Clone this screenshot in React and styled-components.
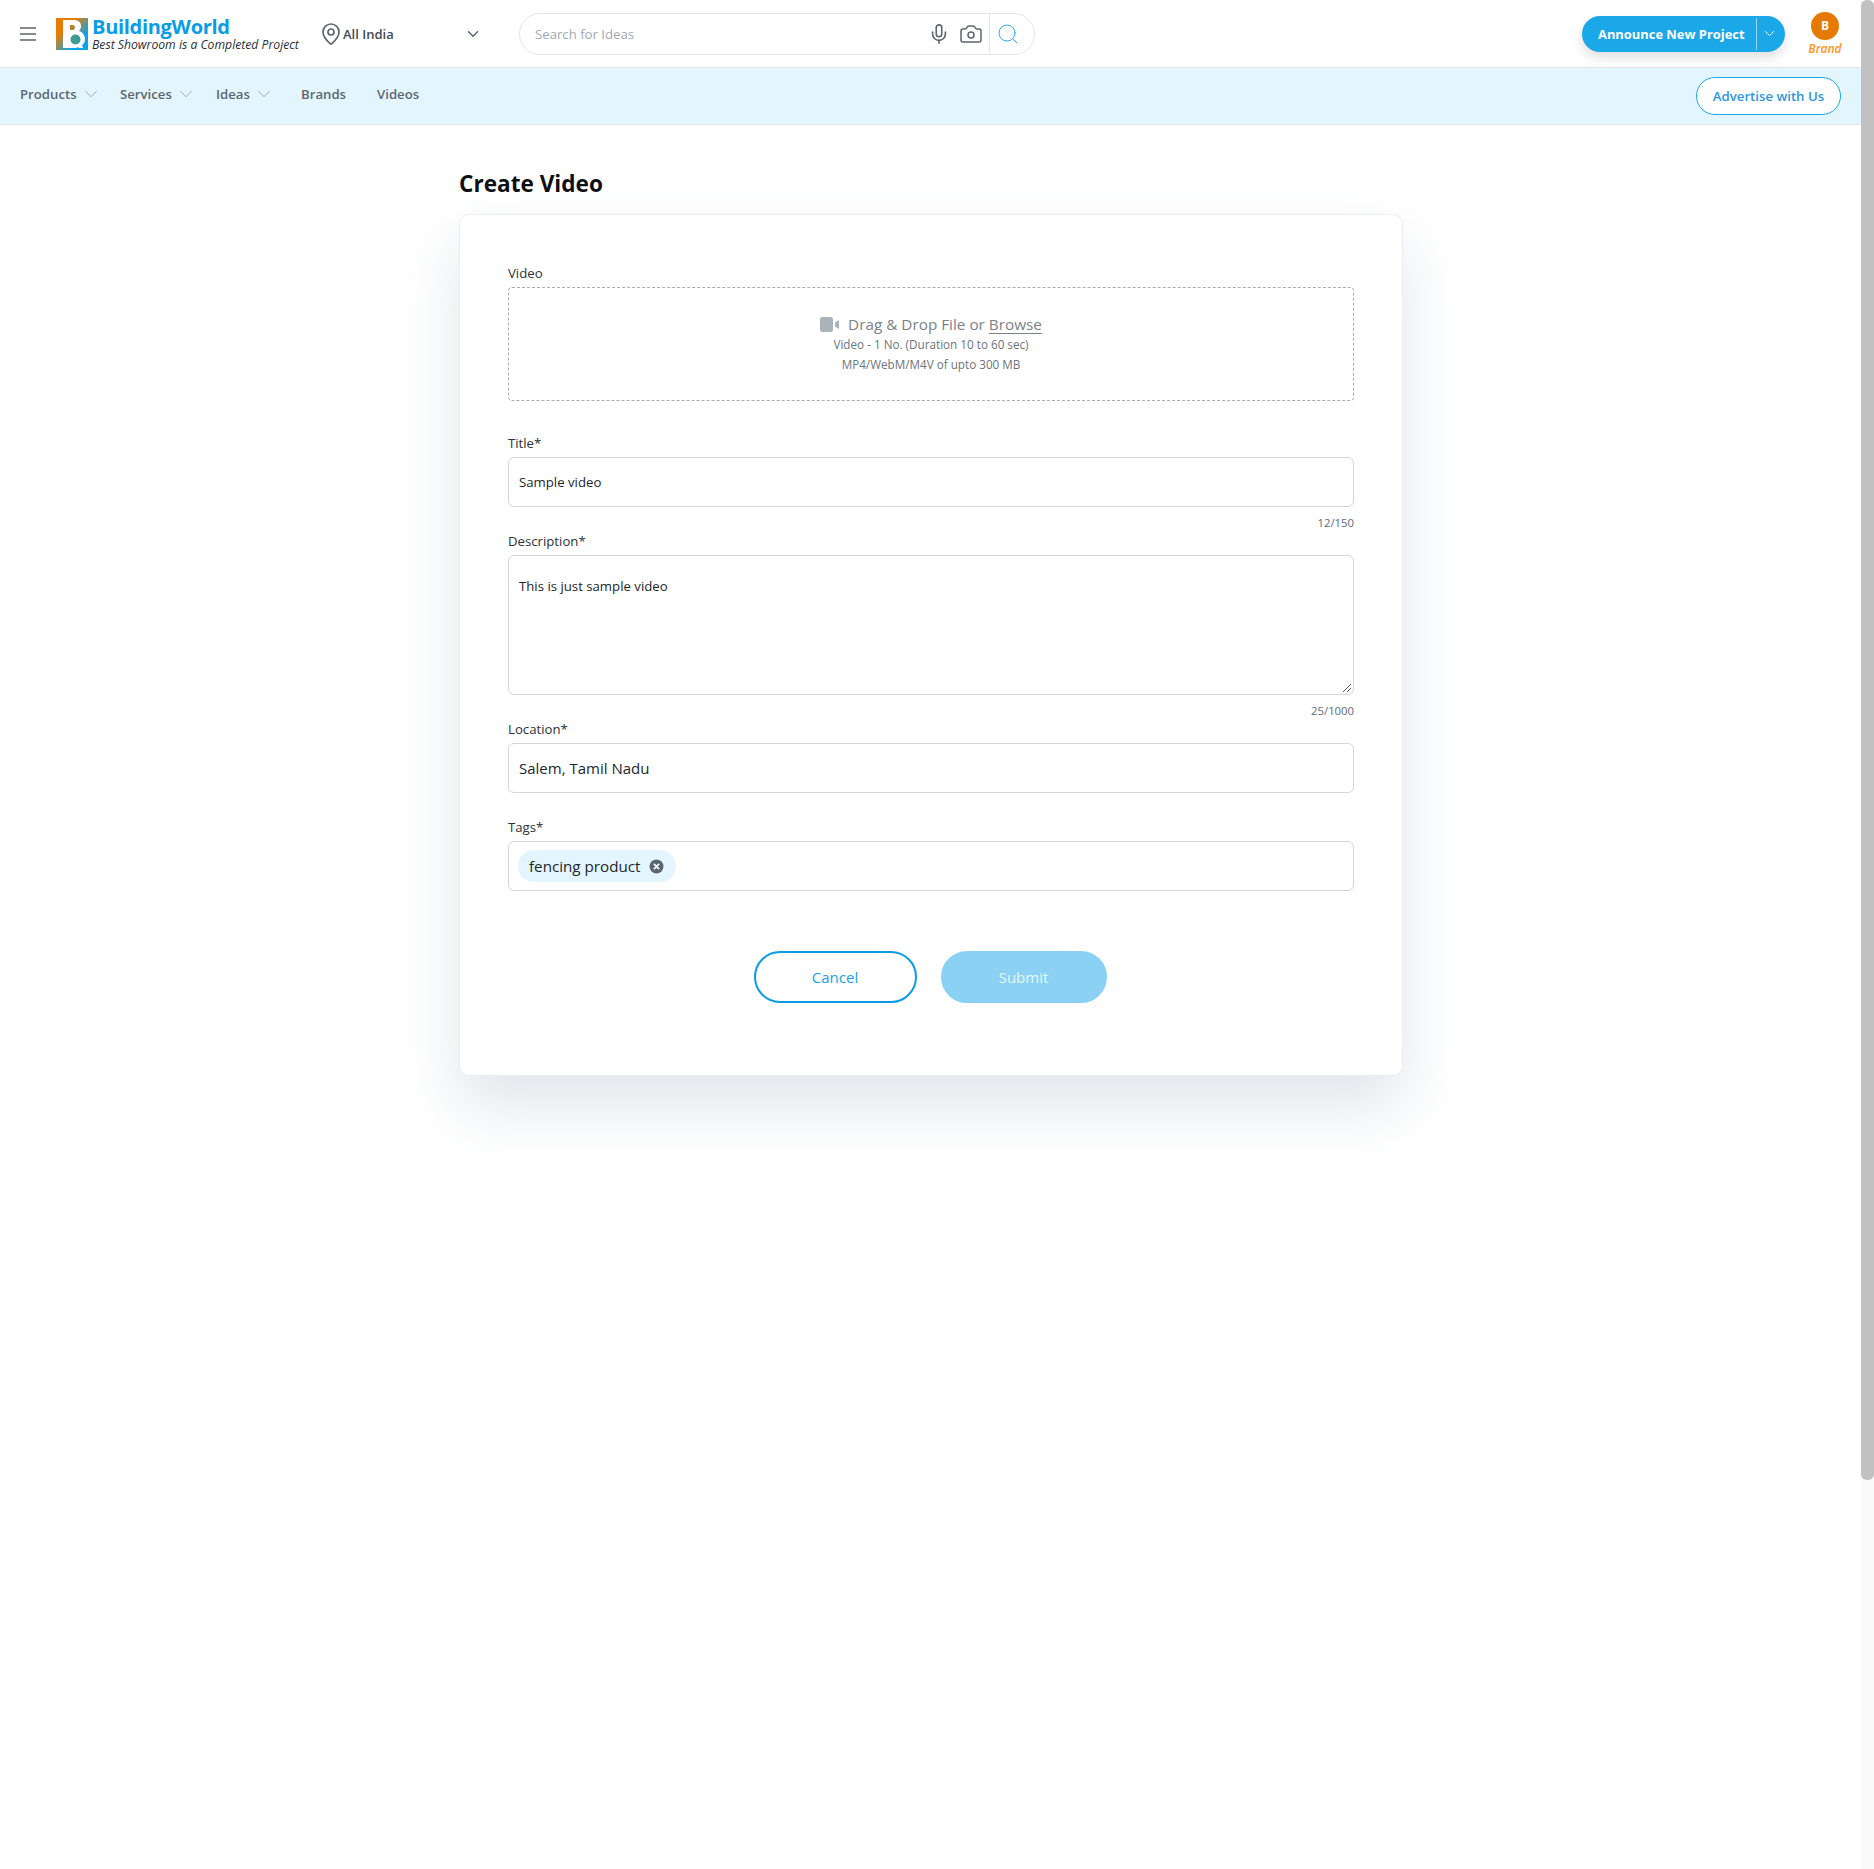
import React from "react";
import styled, { createGlobalStyle } from "styled-components";
import { ChevronDown, Search, Mic, Camera, MapPin } from "lucide-react";

const Global = createGlobalStyle`
  html, body { margin: 0; padding: 0; background: #fff; overflow: hidden; }
  * { box-sizing: border-box; }
  body { font-family: "Open Sans", "Noto Sans", "Liberation Sans", sans-serif; color: #1f2328; }
`;

const Shell = styled.div`
  display: flex;
  width: 1874px;
  height: 1869px;
  overflow: hidden;
`;
const Page = styled.div`
  flex: 1;
  min-width: 0;
`;
const ScrollTrack = styled.div`
  width: 13px;
  background: #fafafa;
`;
const ScrollThumb = styled.div`
  height: 1480px;
  background: #c1c1c1;
  border-radius: 6px;
`;

const Header = styled.header`
  height: 68px;
  display: flex;
  align-items: center;
  padding: 0 20px;
  background: #fff;
  border-bottom: 1px solid #dfe5ea;
`;
const MenuButton = styled.span`
  display: flex;
  width: 16px;
  color: #5f6670;
  margin-right: 20px;
`;
const LogoWrap = styled.div`
  display: flex;
  align-items: center;
  gap: 4px;
  width: 266px;
`;
const LogoText = styled.div`
  display: flex;
  flex-direction: column;
`;
const LogoName = styled.span`
  font-size: 20px;
  line-height: 22px;
  font-weight: 700;
  letter-spacing: -0.3px;
  color: #0a9de6;
`;
const LogoTag = styled.span`
  font-size: 12.2px;
  line-height: 13px;
  font-style: italic;
  color: #2a2f36;
  white-space: nowrap;
`;
const LocationBox = styled.div`
  display: flex;
  align-items: center;
  width: 197px;
  padding-right: 37px;
  color: #5f6670;
`;
const PinIcon = styled(MapPin)`
  margin-left: -3px;
`;
const LocationText = styled.span`
  flex: 1;
  font-size: 13px;
  font-weight: 600;
  color: #454b54;
`;
const SearchBar = styled.div`
  display: flex;
  align-items: center;
  width: 516px;
  height: 42px;
  border: 1px solid #e4e6e8;
  border-radius: 21px;
  padding-left: 15px;
  color: #5f6670;
`;
const Placeholder = styled.span`
  flex: 1;
  font-size: 13.2px;
  color: #a3a8b0;
`;
const SearchIcons = styled.div`
  display: flex;
  align-items: center;
  gap: 9px;
  padding-right: 6px;
`;
const SearchButton = styled.div`
  width: 45px;
  height: 40px;
  border-left: 1px solid #e4e6e8;
  display: flex;
  align-items: center;
  justify-content: flex-start;
  padding-left: 6px;
  color: #32aeea;
`;
const Spacer = styled.div`
  flex: 1;
`;
const Announce = styled.div`
  display: flex;
  align-items: center;
  width: 203px;
  height: 36px;
  background: #1ba8e8;
  color: #fff;
  border-radius: 18px;
  box-shadow: 0 6px 12px rgba(0, 0, 0, 0.12);
`;
const AnnounceLabel = styled.span`
  flex: 1;
  font-size: 12.9px;
  font-weight: 700;
  padding-left: 16px;
  white-space: nowrap;
`;
const AnnounceCaret = styled.span`
  width: 29px;
  height: 32px;
  padding-right: 3px;
  display: flex;
  align-items: center;
  justify-content: center;
  border-left: 1px solid rgba(255, 255, 255, 0.55);
`;
const Account = styled.div`
  display: flex;
  flex-direction: column;
  align-items: center;
  margin-left: 24px;
  padding-top: 2px;
  width: 32px;
`;
const Avatar = styled.div`
  width: 28px;
  height: 28px;
  border-radius: 50%;
  background: #e67a00;
  color: #fff;
  font-size: 12px;
  font-weight: 700;
  display: flex;
  align-items: center;
  justify-content: center;
`;
const AccountName = styled.span`
  font-size: 12px;
  line-height: 18px;
  font-style: italic;
  font-weight: 600;
  color: #ff9421;
`;

const Nav = styled.nav`
  height: 57px;
  display: flex;
  align-items: center;
  padding: 0 20px;
  background: #e3f6ff;
  border-bottom: 1px solid #e3e4e6;
`;
const NavItem = styled.a`
  display: flex;
  align-items: center;
  gap: 3px;
  width: ${(p) => p.$w}px;
  margin-top: -4px;
  font-size: 13.2px;
  font-weight: 600;
  color: #5d6673;
  white-space: nowrap;
`;
const NavCaret = styled(ChevronDown)`
  color: #9aa3ad;
`;
const Advertise = styled.a`
  margin-left: auto;
  width: 145px;
  height: 38px;
  border-radius: 19px;
  background: #fff;
  border: 1px solid #1ba8e8;
  color: #2a97dc;
  font-size: 13.2px;
  font-weight: 600;
  display: flex;
  align-items: center;
  justify-content: center;
`;

const Content = styled.main`
  width: 944px;
  margin: 0 0 0 459px;
`;
const Title = styled.h1`
  margin: 0;
  height: 89px;
  padding-top: 43px;
  font-size: 22.6px;
  line-height: 32px;
  font-weight: 700;
  color: #0d0f12;
`;
const Card = styled.form`
  height: 862px;
  padding: 49px 48px 0;
  background: #fff;
  border: 1px solid #ececef;
  border-radius: 10px;
  box-shadow: 0 30px 60px rgba(90, 110, 140, 0.18);
`;
const Field = styled.div`
  display: flex;
  flex-direction: column;
  margin-bottom: ${(p) => p.$mb ?? 0}px;
`;
const Label = styled.label`
  font-size: 13.2px;
  line-height: 18px;
  height: 18px;
  margin-bottom: 5px;
  color: #2d3238;
`;
const Drop = styled.div`
  height: 114px;
  border: 1px dashed #a9adb2;
  border-radius: 4px;
  display: flex;
  flex-direction: column;
  align-items: center;
  padding-top: 26px;
  color: #6d747c;
`;
const DropHead = styled.div`
  display: flex;
  align-items: center;
  gap: 8px;
  font-size: 15.3px;
  line-height: 20px;
  color: #7b8289;
`;
const BrowseLink = styled.span`
  text-decoration: underline;
  text-underline-offset: 3px;
`;
const DropNote = styled.div`
  font-size: 11.7px;
  line-height: 20px;
  color: #6d747c;
`;
const Input = styled.div`
  height: ${(p) => p.$h ?? 50}px;
  border: 1px solid #d4d5da;
  border-radius: 6px;
  padding: ${(p) => p.$pad ?? "0 10px 1px"};
  display: flex;
  align-items: ${(p) => p.$align ?? "center"};
  font-size: ${(p) => p.$fs ?? 13.2}px;
  color: #22262b;
  position: relative;
  background: #fff;
`;
const Counter = styled.div`
  text-align: right;
  font-size: 11.3px;
  line-height: 16px;
  height: 16px;
  margin-top: 8px;
  margin-bottom: 1px;
  color: #5e6a78;
`;
const Grip = styled.svg`
  position: absolute;
  right: 1px;
  bottom: 1px;
`;
const Chip = styled.span`
  display: inline-flex;
  align-items: center;
  gap: 8px;
  height: 32px;
  padding: 0 12px 0 11px;
  background: #e3f6ff;
  border-radius: 16px;
  font-size: 15.2px;
  color: #22262b;
`;
const Actions = styled.div`
  display: flex;
  justify-content: center;
  gap: 24px;
  margin-top: 60px;
  padding-right: 2px;
`;
const Btn = styled.button`
  width: ${(p) => p.$w}px;
  height: 52px;
  border-radius: 26px;
  font-family: inherit;
  font-size: 15px;
  border: 2px solid ${(p) => (p.$primary ? "#8bd1f3" : "#0a9de6")};
  background: ${(p) => (p.$primary ? "#8bd1f3" : "#fff")};
  color: ${(p) => (p.$primary ? "#e8f6fd" : "#1a9fe5")};
`;

const Burger = () => (
  <svg width="16" height="14" viewBox="0 0 16 14">
    <path d="M0 1h16M0 7h16M0 13h16" stroke="#5f6670" strokeWidth="1.500" />
  </svg>
);

const Logo = () => (
  <svg width="32" height="32" viewBox="0 0 32 32">
    <defs>
      <linearGradient id="lg" x1="0" y1="0" x2="1" y2="1">
        <stop offset="0.3" stopColor="#e87c00" />
        <stop offset="0.72" stopColor="#0ba3ea" />
      </linearGradient>
    </defs>
    <rect width="32" height="32" fill="url(#lg)" />
    <path fillRule="evenodd" fill="#fff" d="M7 2h11c5 0 7 3 7 6 0 2-1 4-2 5 4 1 6 5 6 8 0 3-1 5-3 6l1 3h-4l-1-1c-1 1-2 1-4 1h-11zM14 7v5h3c1 0 2-1 2-2.500S18 7 17 7z" />
    <circle cx="19.500" cy="21.500" r="5" fill="#3d9a97" />
  </svg>
);

const VideoGlyph = () => (
  <svg width="20" height="15" viewBox="0 0 20 15">
    <rect x="0" y="0" width="13" height="15" rx="2.500" fill="#a9b4b9" />
    <path d="M15 5.500l4-2.500v9l-4-2.500z" fill="#a9b4b9" />
  </svg>
);

const CloseDot = () => (
  <svg width="15" height="15" viewBox="0 0 14 14">
    <circle cx="7" cy="7" r="6.500" fill="#5c6670" />
    <path d="M5 5l4 4M9 5l-4 4" stroke="#fff" strokeWidth="1.600" strokeLinecap="round" />
  </svg>
);

export default function App() {
  return (
    <Shell>
      <Global />
      <Page>
        <Header>
          <MenuButton><Burger /></MenuButton>
          <LogoWrap>
            <Logo />
            <LogoText>
              <LogoName>BuildingWorld</LogoName>
              <LogoTag>Best Showroom is a Completed Project</LogoTag>
            </LogoText>
          </LogoWrap>
          <LocationBox>
            <PinIcon size={24} strokeWidth={1.7} />
            <LocationText>All India</LocationText>
            <ChevronDown size={18} strokeWidth={2} />
          </LocationBox>
          <SearchBar>
            <Placeholder>Search for Ideas</Placeholder>
            <SearchIcons>
              <Mic size={22} strokeWidth={1.8} />
              <Camera size={24} strokeWidth={1.5} />
            </SearchIcons>
            <SearchButton><Search size={24} strokeWidth={1} /></SearchButton>
          </SearchBar>
          <Spacer />
          <Announce>
            <AnnounceLabel>Announce New Project</AnnounceLabel>
            <AnnounceCaret><ChevronDown size={17} strokeWidth={1.4} /></AnnounceCaret>
          </Announce>
          <Account>
            <Avatar>B</Avatar>
            <AccountName>Brand</AccountName>
          </Account>
        </Header>
        <Nav>
          <NavItem $w={100}>Products <NavCaret size={22} strokeWidth={1} /></NavItem>
          <NavItem $w={96}>Services <NavCaret size={22} strokeWidth={1} /></NavItem>
          <NavItem $w={85}>Ideas <NavCaret size={22} strokeWidth={1} /></NavItem>
          <NavItem $w={76}>Brands</NavItem>
          <NavItem $w={60}>Videos</NavItem>
          <Advertise>Advertise with Us</Advertise>
        </Nav>
        <Content>
          <Title>Create Video</Title>
          <Card>
            <Field $mb={33}>
              <Label>Video</Label>
              <Drop>
                <DropHead><VideoGlyph /> <span>Drag &amp; Drop File or <BrowseLink>Browse</BrowseLink></span></DropHead>
                <DropNote>Video - 1 No. (Duration 10 to 60 sec)</DropNote>
                <DropNote>MP4/WebM/M4V of upto 300 MB</DropNote>
              </Drop>
            </Field>
            <Field>
              <Label>Title*</Label>
              <Input>Sample video</Input>
              <Counter>12/150</Counter>
            </Field>
            <Field>
              <Label>Description*</Label>
              <Input $h={140} $align="flex-start" $pad="21px 10px">
                This is just sample video
                <Grip width="11" height="11" viewBox="0 0 11 11">
                  <path d="M10 2L2 10M10 6L6 10" stroke="#555" strokeWidth="1" />
                </Grip>
              </Input>
              <Counter>25/1000</Counter>
            </Field>
            <Field $mb={25}>
              <Label>Location*</Label>
              <Input $fs={15}>Salem, Tamil Nadu</Input>
            </Field>
            <Field>
              <Label>Tags*</Label>
              <Input $pad="0 10px 0 9px">
                <Chip>fencing product <CloseDot /></Chip>
              </Input>
            </Field>
            <Actions>
              <Btn type="button" $w={163}>Cancel</Btn>
              <Btn type="button" $w={166} $primary>Submit</Btn>
            </Actions>
          </Card>
        </Content>
      </Page>
      <ScrollTrack><ScrollThumb /></ScrollTrack>
    </Shell>
  );
}
